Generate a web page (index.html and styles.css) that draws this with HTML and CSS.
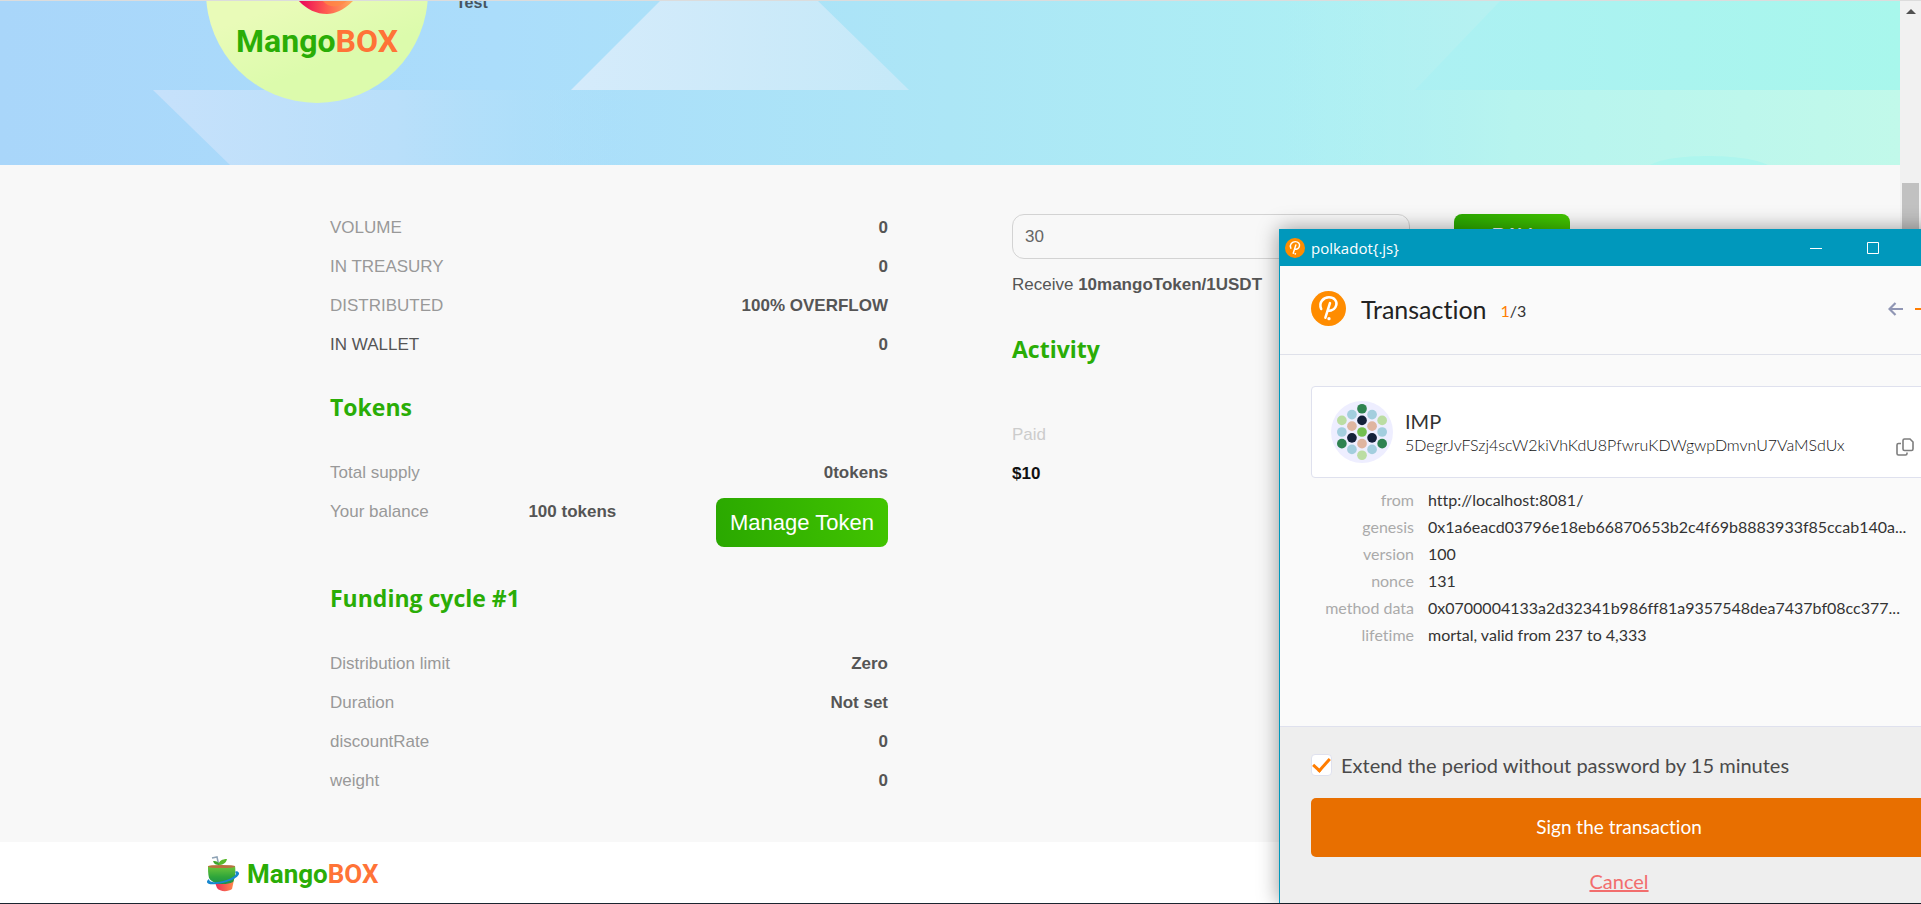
FILE: index.html
```html
<!DOCTYPE html>
<html lang="en">
<head>
<meta charset="utf-8">
<title>MangoBOX</title>
<link rel="stylesheet" href="styles.css">
</head>
<body>
<svg class="defs" width="0" height="0" aria-hidden="true">
  <symbol id="dot-logo" viewBox="0 0 36 36">
    <circle cx="18" cy="18" r="18" fill="#ff8c00"/>
    <path d="M10.5 18.5C7.5 11.5 13 6.500 18.500 6.500C24 6.500 27 10.500 26 14.500C25 19 21 20.500 17 20.500M19.500 12.500L14.800 27.500" fill="none" stroke="#fff" stroke-width="2.600" stroke-linecap="round"/>
    <circle cx="18.500" cy="28.500" r="1.700" fill="#fff"/>
  </symbol>
</svg>
<div class="viewport">
  <div class="page">
    <header class="banner">
      <svg class="banner-art" viewBox="0 0 1900 164" preserveAspectRatio="none" aria-hidden="true">
        <defs>
          <linearGradient id="tri" x1="0" x2="1"><stop offset="0" stop-color="#d5ebfb"/><stop offset="1" stop-color="#c5e9f8"/></linearGradient>
          <linearGradient id="low" x1="0" x2="1"><stop offset="0" stop-color="#c6e1fb"/><stop offset=".5" stop-color="#b9dffa"/><stop offset="1" stop-color="#abe1f8" stop-opacity="0"/></linearGradient>
          <linearGradient id="mid" x1="0" x2="1"><stop offset="0" stop-color="#b6f1f1" stop-opacity="0"/><stop offset="1" stop-color="#b6f1f1"/></linearGradient>
          <linearGradient id="right" x1="0" x2="1"><stop offset="0" stop-color="#b6f1f1" stop-opacity=".6"/><stop offset=".2" stop-color="#b7f4ef"/><stop offset="1" stop-color="#c1f9ea"/></linearGradient>
        </defs>
        <path d="M660 0H818L909 89H571Z" fill="url(#tri)"/>
        <path d="M153 89H640V164H230Z" fill="url(#low)"/>
        <path d="M1280 0H1500L1415 89V164H1280Z" fill="url(#mid)"/>
        <path d="M1415 89H1900V164H1415Z" fill="url(#right)"/>
        <path d="M1650 164C1670 152 1745 152 1768 164Z" fill="#aef6ee"/>
      </svg>
      <div class="avatar">
        <svg class="avatar-fruit" viewBox="0 0 56 60" aria-hidden="true">
          <defs><linearGradient id="fruit"><stop offset="0" stop-color="#e8005a"/><stop offset=".5" stop-color="#ff5b50"/><stop offset="1" stop-color="#ffb45c"/></linearGradient></defs>
          <path d="M0 46H56C46 56 37 60 29 60C18 60 8 55 0 46Z" fill="url(#fruit)"/>
          <path d="M24 46H50C40 55 30 54 24 46Z" fill="#ff8c45" opacity=".7"/>
        </svg>
        <span class="brand brand-large">Mango<b>BOX</b></span>
      </div>
      <span class="project-name">Test</span>
    </header>

    <main class="content">
      <section>
        <dl class="stats">
          <div><dt>VOLUME</dt><dd>0</dd></div>
          <div><dt>IN TREASURY</dt><dd>0</dd></div>
          <div><dt>DISTRIBUTED</dt><dd>100% OVERFLOW</dd></div>
          <div><dt class="strong">IN WALLET</dt><dd>0</dd></div>
        </dl>
        <h2>Tokens</h2>
        <dl class="stats">
          <div><dt>Total supply</dt><dd>0tokens</dd></div>
          <div class="balance"><dt>Your balance</dt><dd>100 tokens</dd><dd class="action"><button type="button" class="green manage">Manage Token</button></dd></div>
        </dl>
        <h2>Funding cycle #1</h2>
        <dl class="stats">
          <div><dt>Distribution limit</dt><dd>Zero</dd></div>
          <div><dt>Duration</dt><dd>Not set</dd></div>
          <div><dt>discountRate</dt><dd>0</dd></div>
          <div><dt>weight</dt><dd>0</dd></div>
        </dl>
      </section>
      <section>
        <form class="pay">
          <input type="text" value="30" aria-label="Amount">
          <button type="button" class="green pay-button">PAY</button>
        </form>
        <p class="receive">Receive <b>10mangoToken/1USDT</b></p>
        <h2 class="activity">Activity</h2>
        <p class="paid">Paid</p>
        <p class="paid-sum">$10</p>
      </section>
    </main>

    <footer class="footer">
      <svg class="footer-icon" viewBox="0 0 34 36" aria-hidden="true">
        <defs>
          <linearGradient id="cup" x1="0" y1="0" x2="0" y2="1"><stop offset="0" stop-color="#6fc63a"/><stop offset=".6" stop-color="#2fa63a"/><stop offset="1" stop-color="#1b8f4c"/></linearGradient>
          <linearGradient id="base"><stop offset="0" stop-color="#e8285c"/><stop offset="1" stop-color="#ff8a4a"/></linearGradient>
        </defs>
        <path d="M6 2L11 1L13 10" fill="none" stroke="#8fa3b5" stroke-width="1.500"/>
        <path d="M12 9C13 5 16 3 21 3C20 7 17 9 12 9Z" fill="#58b92b"/>
        <path d="M13 9C10 9 8 8 7 5C11 5 13 6 13 9Z" fill="#3da52b"/>
        <path d="M8 24H28L26 33C22 36 14 36 11 32Z" fill="url(#base)"/>
        <path d="M2 10H29C30 17 29 22 27 26C18 30 6 28 3 22C2 18 2 14 2 10Z" fill="url(#cup)"/>
        <ellipse cx="15.500" cy="10.500" rx="13.500" ry="1.600" fill="#b9703f"/>
        <path d="M3 23C-2 27 3 29 10 28C22 27 34 21 33 17C32 15 30 15 29 16C32 18 27 22 19 24.500C11 27 3 27 3 23Z" fill="#1787cf"/>
      </svg>
      <span class="brand">Mango<b>BOX</b></span>
    </footer>
  </div>
  <div class="scrollbar" aria-hidden="true"><i class="scroll-up"></i><i class="thumb"></i></div>
</div>

<div class="popup" role="dialog" aria-label="polkadot{.js}">
  <div class="titlebar">
    <svg class="title-icon"><use href="#dot-logo"/></svg>
    <span class="title">polkadot{.js}</span>
    <button type="button" class="win" aria-label="Minimize"><svg viewBox="0 0 12 12"><path d="M0 6.500H12" stroke="#fff"/></svg></button>
    <button type="button" class="win" aria-label="Maximize"><svg viewBox="0 0 12 12"><path d="M.5.5H11.500V11.500H.5Z" fill="none" stroke="#fff"/></svg></button>
  </div>
  <div class="popup-head">
    <svg class="head-logo"><use href="#dot-logo"/></svg>
    <h1>Transaction</h1>
    <span class="count"><em>1</em>/3</span>
    <button type="button" class="arrow" aria-label="Previous"><svg viewBox="0 0 16 14"><path d="M15 7H2M7.500 1L1.500 7L7.500 13" fill="none" stroke="#9096b4" stroke-width="2.200"/></svg></button>
    <button type="button" class="arrow" aria-label="Next"><svg viewBox="0 0 16 14"><path d="M1 7H14M8.500 1L14.500 7L8.500 13" fill="none" stroke="#ff7d01" stroke-width="2.200"/></svg></button>
  </div>
  <div class="popup-body">
    <div class="account">
      <svg class="identicon" viewBox="0 0 64 64" aria-hidden="true">
        <circle cx="32" cy="32" r="32" fill="#eeeeff"/>
        <g fill="#2f8350"><circle cx="32" cy="8" r="5"/><circle cx="11.200" cy="44" r="5"/><circle cx="52.800" cy="44" r="5"/></g>
        <g fill="#a3cede"><circle cx="21.600" cy="14" r="5"/><circle cx="42.400" cy="14" r="5"/><circle cx="11.200" cy="32" r="5"/><circle cx="52.800" cy="32" r="5"/><circle cx="21.600" cy="50" r="5"/><circle cx="42.400" cy="50" r="5"/></g>
        <g fill="#bbdda3"><circle cx="11.200" cy="20" r="5"/><circle cx="52.800" cy="20" r="5"/><circle cx="32" cy="56" r="5"/></g>
        <g fill="#dfb5a0"><circle cx="21.600" cy="26" r="5"/><circle cx="42.400" cy="26" r="5"/><circle cx="32" cy="44" r="5"/></g>
        <g fill="#14213a"><circle cx="32" cy="20" r="5"/><circle cx="21.600" cy="38" r="5"/><circle cx="42.400" cy="38" r="5"/></g>
        <circle cx="32" cy="32" r="5" fill="#72bf50"/>
      </svg>
      <div class="account-text">
        <div class="account-name">IMP</div>
        <div class="address">5DegrJvFSzj4scW2kiVhKdU8PfwruKDWgwpDmvnU7VaMSdUx</div>
      </div>
      <button type="button" class="copy" aria-label="Copy address"><svg viewBox="0 0 18 18"><path d="M8.500 1H14L17 4V11Q17 12.500 15.500 12.500H8.500Q7 12.500 7 11V2.500Q7 1 8.500 1ZM5 5.500H2.500Q1 5.500 1 7V15.500Q1 17 2.500 17H9.500Q11 17 11 15.500V14.500" fill="none" stroke="#7d7d7d" stroke-width="1.600"/></svg></button>
    </div>
    <table class="details">
      <tr><th scope="row">from</th><td>http://localhost:8081/</td></tr>
      <tr><th scope="row">genesis</th><td>0x1a6eacd03796e18eb66870653b2c4f69b8883933f85ccab140a...</td></tr>
      <tr><th scope="row">version</th><td>100</td></tr>
      <tr><th scope="row">nonce</th><td>131</td></tr>
      <tr><th scope="row">method data</th><td>0x0700004133a2d32341b986ff81a9357548dea7437bf08cc377...</td></tr>
      <tr><th scope="row">lifetime</th><td>mortal, valid from 237 to 4,333</td></tr>
    </table>
  </div>
  <div class="popup-foot">
    <label class="extend"><input type="checkbox" checked>Extend the period without password by 15 minutes</label>
    <button type="button" class="sign">Sign the transaction</button>
    <a href="#" class="cancel">Cancel</a>
  </div>
</div>
</body>
</html>
```
FILE: styles.css
```css
* { box-sizing: border-box; }
body, h1, h2, p, dl, dd { margin: 0; }
button, input { font: inherit; }
button { border: 0; cursor: pointer; }
body {
  min-height: 100vh;
  overflow: hidden;
  font: 17px/22px "Liberation Sans", Arial, sans-serif;
  color: #555;
  background: #f8f8f8;
}
.defs { position: absolute; }
.viewport {
  display: grid;
  grid-template-columns: 1fr 21px;
  min-height: 100vh;
  border-top: 1px solid #dcdcdc;
  border-bottom: 1px solid #1c2530;
}
.page { display: flex; flex-direction: column; }

.banner {
  position: relative;
  display: flex;
  align-items: flex-start;
  gap: 28px;
  min-height: 164px;
  padding: 0 206px;
  overflow: hidden;
  background: linear-gradient(90deg, #a9d6fa 0, #abddfb 26%, #ace6f6 50%, #adeff4 70%, #a8f7ec 100%);
}
.banner-art { position: absolute; inset: 0; width: 100%; height: 100%; }
.avatar {
  position: relative;
  display: flex;
  flex-direction: column;
  align-items: center;
  width: 222px;
  height: 222px;
  margin-top: -120px;
  padding-top: 73px;
  border-radius: 50%;
  background: linear-gradient(160deg, #e9fbb8 50%, #dcfbac 75%);
}
.avatar-fruit { width: 56px; height: 60px; margin-left: 18px; }
.brand { font: 700 26px/32px Roboto, sans-serif; color: #2aad06; }
.brand b { font-weight: 700; color: #ff7337; }
.brand-large { font-size: 32px; line-height: 40px; margin-top: 7px; }
.project-name { position: relative; margin-top: -8px; font-size: 16px; line-height: 20px; font-weight: bold; color: #465560; }

.content {
  display: grid;
  grid-template-columns: 1fr 1fr;
  gap: 124px;
  width: 1240px;
  max-width: 100%;
  margin: 0 auto;
  padding: 44px 0 41px;
}
.stats > div { display: flex; justify-content: space-between; min-height: 39px; padding-top: 8px; }
.stats dt { color: #999; }
.stats .strong { color: #555; }
.stats dd { font-weight: bold; }
.stats .balance { padding: 5px 0 9px; }
.balance dt, .balance dd { padding-top: 3px; }
.balance .action { padding-top: 0; font-weight: normal; }
h2 { margin: 25px 0 30px; font: 700 23px/34px "Open Sans", sans-serif; color: #2aad06; }
.green { color: #fff; background: linear-gradient(80deg, #2aa800, #42c500); }
.manage { padding: 0 14px; height: 49px; font-size: 22px; border-radius: 8px; }
.pay { display: flex; justify-content: space-between; padding-top: 5px; }
.pay input {
  width: 398px;
  height: 45px;
  padding: 0 12px;
  color: #666;
  background: transparent;
  border: 1px solid #d3d3d3;
  border-radius: 12px;
}
.pay-button { width: 116px; height: 44px; font-size: 22px; border-radius: 8px; }
.receive { margin-top: 15px; }
.activity { margin-top: 36px; }
.paid { margin-top: 58px; color: #ccc; }
.paid-sum { margin-top: 17px; color: #111; font-weight: bold; }

.footer { display: flex; flex: 1; align-items: center; gap: 7px; min-height: 61px; padding: 2px 206px 0; background: #fff; }
.footer-icon { width: 34px; height: 36px; }

.scrollbar { display: flex; flex-direction: column; align-items: center; padding-top: 8px; background: #f1f1f1; }
.scroll-up { border: 5px solid transparent; border-top: 0; border-bottom: 5px solid #505050; }
.thumb { width: 17px; height: 120px; margin-top: 169px; background: #c1c1c1; }

.popup {
  position: absolute;
  top: 229px;
  right: -38px;
  bottom: 1px;
  display: flex;
  flex-direction: column;
  width: 680px;
  font-family: Lato, sans-serif;
  font-variant-ligatures: none;
  color: #333;
  background: #fafafa;
  border: 1px solid #0098bc;
  border-bottom: 0;
  box-shadow: 0 0 20px rgba(0, 0, 0, .4);
}
.titlebar { display: flex; align-items: center; height: 36px; padding: 0 79px 0 5px; color: #fff; background: #0098bc; }
.title-icon { width: 20px; height: 20px; margin-right: 6px; }
.title { flex: 1; font: 15px/22px "Open Sans", sans-serif; }
.win { display: flex; padding: 0; margin-left: 45px; background: none; }
.win svg { width: 12px; height: 12px; }
.popup-head { display: flex; align-items: center; height: 89px; padding: 0 28px 3px 31px; border-bottom: 1px solid #dfe1ea; }
.head-logo { width: 35px; height: 35px; margin-right: 15px; }
h1 { font-size: 25px; line-height: 32px; font-weight: 400; color: #222; }
.count { flex: 1; margin-left: 14px; padding-top: 4px; font-size: 16px; }
.count em { font-style: normal; color: #ff7d01; }
.arrow { display: flex; padding: 0; margin-left: 10px; background: none; }
.arrow svg { width: 16px; height: 14px; }
.popup-body { flex: 1; padding: 31px 0 0 31px; }
.account { display: flex; align-items: center; width: 616px; height: 92px; padding: 0 12px 0 19px; background: #fff; border: 1px solid #dfe1ee; border-radius: 4px; }
.identicon { width: 62px; height: 62px; }
.account-text { flex: 1; margin-left: 12px; }
.account-name { font-size: 20px; line-height: 26px; }
.address { font-size: 16px; line-height: 22px; font-weight: 300; color: #111; }
.copy { padding: 30px 0 0; background: none; display: flex; }
.copy svg { width: 18px; height: 18px; }
.details { width: 616px; margin-top: 8px; border-spacing: 0; font-size: 16px; line-height: 27px; }
.details th { width: 103px; padding: 0; text-align: right; font-weight: 400; color: #aaa; }
.details td { padding: 0 0 0 14px; white-space: nowrap; }
.popup-foot { display: flex; flex-direction: column; padding: 26px 31px 10px; background: #eee; border-top: 1px solid #dfe1ee; }
.extend { display: flex; align-items: center; gap: 9px; font-size: 20px; line-height: 24px; color: #4a4a4a; }
.extend input { appearance: none; display: grid; place-items: center; width: 21px; height: 22px; margin: 0; background: #fff; border: 1px solid #dfe1ee; border-radius: 4px; }
.extend input:checked::before { content: ""; width: 14px; height: 7px; margin-top: -5px; border: solid #ff7d01; border-width: 0 0 3px 3px; transform: rotate(-48deg); }
.sign { height: 59px; margin-top: 21px; padding-bottom: 3px; color: #fff; font-size: 19px; font-weight: 400; background: #e86f00; border-radius: 5px; }
.cancel { align-self: center; margin-top: 12px; font-size: 20px; line-height: 24px; color: #f26d6d; }
```
